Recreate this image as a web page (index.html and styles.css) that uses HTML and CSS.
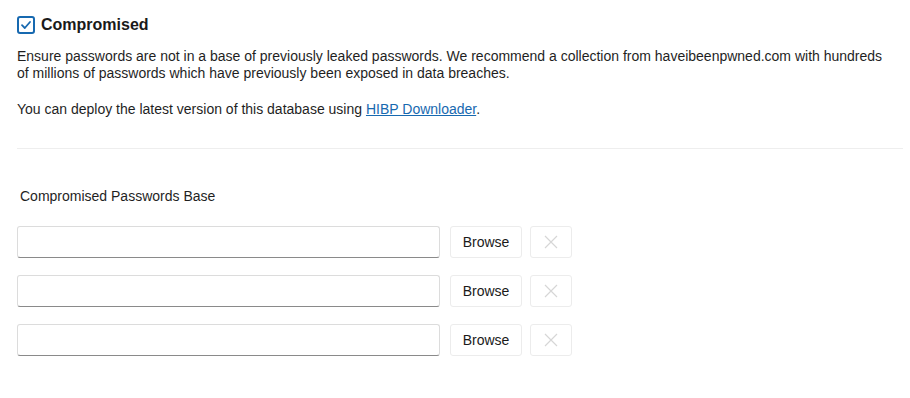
FILE: index.html
```html
<!DOCTYPE html>
<html>
<head>
<meta charset="utf-8">
<link rel="stylesheet" href="styles.css">
</head>
<body>
<div class="page">
  <div class="header">
    <span class="checkbox">
      <svg width="12" height="12" viewBox="0 0 12 12"><path d="M2 6.2 L4.8 9 L10 3" fill="none" stroke="#1769b0" stroke-width="1.8" stroke-linecap="round" stroke-linejoin="round"/></svg>
    </span>
    <h2 class="title">Compromised</h2>
  </div>
  <p class="desc">Ensure passwords are not in a base of previously leaked passwords. We recommend a collection from haveibeenpwned.com with hundreds of millions of passwords which have previously been exposed in data breaches.</p>
  <p class="desc">You can deploy the latest version of this database using <a href="#" class="link">HIBP Downloader</a>.</p>
  <div class="divider"></div>
  <div class="field-label">Compromised Passwords Base</div>
  <div class="rows">
    <div class="row">
      <div class="input"></div>
      <button class="btn">Browse</button>
      <button class="btn-x"><svg width="14" height="14" viewBox="0 0 14 14"><path d="M1 1 L13 13 M13 1 L1 13" stroke="#d6d6d6" stroke-width="1.2"/></svg></button>
    </div>
    <div class="row">
      <div class="input"></div>
      <button class="btn">Browse</button>
      <button class="btn-x"><svg width="14" height="14" viewBox="0 0 14 14"><path d="M1 1 L13 13 M13 1 L1 13" stroke="#d6d6d6" stroke-width="1.2"/></svg></button>
    </div>
    <div class="row">
      <div class="input"></div>
      <button class="btn">Browse</button>
      <button class="btn-x"><svg width="14" height="14" viewBox="0 0 14 14"><path d="M1 1 L13 13 M13 1 L1 13" stroke="#d6d6d6" stroke-width="1.2"/></svg></button>
    </div>
  </div>
</div>
</body>
</html>
```
FILE: styles.css
```css
html, body {
  margin: 0;
  padding: 0;
  background: #ffffff;
}
body {
  font-family: "Liberation Sans", Arial, sans-serif;
  color: #1f1f1f;
  font-size: 14px;
}
.page {
  padding: 15px 7px 0 17px;
}
.header {
  display: flex;
  align-items: center;
  gap: 6px;
  height: 20px;
}
.checkbox {
  box-sizing: border-box;
  width: 18px;
  height: 18px;
  border: 2px solid #1769b0;
  border-radius: 3px;
  display: flex;
  align-items: center;
  justify-content: center;
}
.title {
  margin: 0;
  font-size: 16px;
  font-weight: bold;
  color: #1a1a1a;
}
.desc {
  margin: 13px 0 0 0;
  padding-right: 8px;
  line-height: 17px;
  font-size: 14px;
}
.desc + .desc {
  margin-top: 19px;
}
.link {
  color: #1769b0;
  text-decoration: underline;
}
.divider {
  height: 1px;
  background: #eeeeee;
  margin-top: 30px;
}
.field-label {
  margin-top: 39px;
  margin-left: 3px;
  font-size: 14px;
  line-height: 17px;
}
.rows {
  margin-top: 21px;
  display: flex;
  flex-direction: column;
  gap: 17px;
}
.row {
  display: flex;
  gap: 10px;
  height: 32px;
}
.input {
  box-sizing: border-box;
  width: 423px;
  height: 32px;
  border: 1px solid #dcdcdc;
  border-bottom: 1px solid #8a8a8a;
  border-radius: 3px;
}
.btn {
  box-sizing: border-box;
  width: 72px;
  height: 32px;
  background: #ffffff;
  border: 1px solid #ececec;
  border-radius: 3px;
  font-family: "Liberation Sans", Arial, sans-serif;
  font-size: 14px;
  color: #1a1a1a;
  padding: 0;
}
.btn-x {
  box-sizing: border-box;
  width: 42px;
  height: 32px;
  margin-left: -2px;
  background: #ffffff;
  border: 1px solid #ececec;
  border-radius: 3px;
  padding: 0;
  display: flex;
  align-items: center;
  justify-content: center;
}
```
